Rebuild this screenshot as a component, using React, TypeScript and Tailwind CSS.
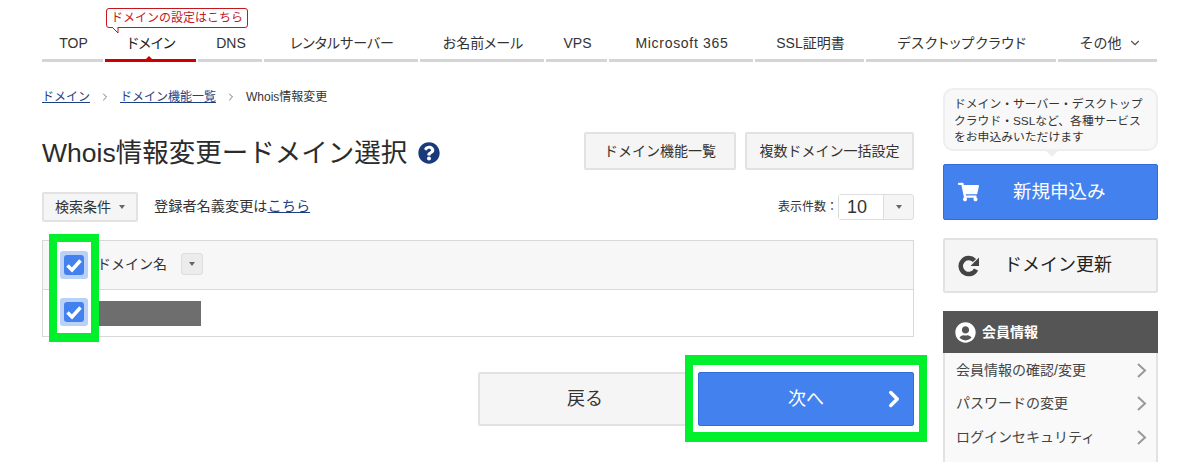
import { ChevronDown, ChevronRight } from 'lucide-react'
import { FaQuestionCircle, FaShoppingCart, FaUserCircle } from 'react-icons/fa'

const navItems = [
  { label: 'TOP', width: 'w-[61px]' },
  { label: 'ドメイン', width: 'w-[91px]', active: true },
  { label: 'DNS', width: 'w-[64px]' },
  { label: 'レンタルサーバー', width: 'w-[154px]' },
  { label: 'お名前メール', width: 'w-[124px]' },
  { label: 'VPS', width: 'w-[61px]' },
  { label: 'Microsoft 365', width: 'w-[144px]', extra: 'tracking-[0.7px]' },
  { label: 'SSL証明書', width: 'w-[109px]' },
  { label: 'デスクトップクラウド', width: 'w-[190px]', extra: 'tracking-[0.8px]' },
]

const memberLinks = ['会員情報の確認/変更', 'パスワードの変更', 'ログインセキュリティ']

function Caret() {
  return <span className="inline-block border-x-[3px] border-t-[4px] border-x-transparent border-t-[#666]" />
}

function Check() {
  return (
    <span className="flex h-[28px] w-[28px] items-center justify-center rounded-[3px] bg-[#b9d0f7]">
      <span className="flex h-[20px] w-[20px] items-center justify-center rounded-[3px] bg-[#4382ee]">
        <svg viewBox="0 0 20 20" className="h-[20px] w-[20px]" fill="none" stroke="#fff" strokeWidth="3.5">
          <path d="M3.5 10.5 8 15 16.5 5.5" />
        </svg>
      </span>
    </span>
  )
}

function ListChevron() {
  return (
    <svg viewBox="0 0 10 15" className="h-[15px] w-[10px]" fill="none" stroke="#999" strokeWidth="2">
      <path d="M1 1l7 6.5-7 6.5" />
    </svg>
  )
}

export default function App() {
  return (
    <div className="relative h-[462px] w-[1200px] overflow-hidden bg-white font-['Liberation_Sans','Noto_Sans_CJK_JP',sans-serif] text-[#333]">
      <nav className="relative flex gap-[2px] pl-[42px] pt-[26px]">
        <div className="absolute left-[106px] top-[8px] flex h-[20px] w-[142px] items-center justify-center rounded-[3px] border border-[#c4161c] bg-white text-[12px] text-[#c4161c]">
          ドメインの設定はこちら
          <svg viewBox="0 0 8 7" className="absolute left-[5px] top-[18px] h-[7px] w-[8px]" fill="#fff" stroke="#c4161c">
            <path d="M0 0 6 6V0" />
          </svg>
        </div>
        {navItems.map((item) => (
          <div
            key={item.label}
            className={`${item.width} ${item.extra ?? ''} relative flex h-[36px] items-start justify-center border-b-[3px] pl-[2px] pt-[7px] text-[14px] leading-[20px] [font-feature-settings:'palt'] ${item.active ? 'border-[#c00] text-[#222]' : 'border-[#d5d5d5] text-[#333]'}`}
          >
            {item.label}
            {item.active && (
              <span className="absolute bottom-0 left-[41px] border-x-[3px] border-b-[3px] border-x-transparent border-b-[#c00]" />
            )}
          </div>
        ))}
        <div className="flex h-[36px] w-[99px] items-start justify-center gap-[6px] border-b-[3px] border-[#d5d5d5] pl-[6px] pt-[7px] text-[14px] leading-[20px]">
          その他
          <ChevronDown size={14} className="mt-[3px] text-[#555]" />
        </div>
      </nav>

      <main className="flex pl-[42px] pt-[26px]">
        <div className="w-[872px]">
          <div className="flex h-[18px] items-center text-[12px] leading-[18px]">
            <a className="text-[#1e3f84] underline">ドメイン</a>
            <ChevronRight size={12} className="mx-[9px] text-[#777]" />
            <a className="text-[#1e3f84] underline">ドメイン機能一覧</a>
            <ChevronRight size={12} className="mx-[9px] text-[#777]" />
            <span>Whois情報変更</span>
          </div>

          <div className="mt-[26px] flex h-[38px] items-center">
            <h1 className="pt-[3px] text-[26.5px] font-normal leading-[38px] text-[#2b2b2b]">Whois情報変更ードメイン選択</h1>
            <FaQuestionCircle className="ml-[11px] mt-[4px] h-[22px] w-[22px] text-[#1a3a7c]" />
            <div className="ml-auto flex gap-[9px]">
              <button className="h-[38px] w-[152px] rounded-[2px] border-2 border-[#e2e2e2] bg-[#f5f5f5] text-[14px]">ドメイン機能一覧</button>
              <button className="h-[38px] w-[169px] rounded-[2px] border-2 border-[#e2e2e2] bg-[#f5f5f5] text-[14px]">複数ドメイン一括設定</button>
            </div>
          </div>

          <div className="mt-[22px] flex h-[30px] items-center">
            <button className="flex h-[30px] w-[96px] items-center justify-center gap-[8px] rounded-[2px] border-2 border-[#e2e2e2] bg-[#f5f5f5] text-[14px]">
              検索条件
              <Caret />
            </button>
            <span className="ml-[16px] text-[14.2px]">
              登録者名義変更は<a className="text-[#1e3f84] underline">こちら</a>
            </span>
            <span className="ml-auto text-[12px]">表示件数：</span>
            <div className="flex h-[26px] w-[76px] rounded-[3px] border border-[#ddd] bg-[#f5f5f5]">
              <span className="flex w-[45px] items-center justify-center border-r border-[#ddd] bg-white pr-[8px] text-[18px]">10</span>
              <span className="flex flex-1 items-center justify-center"><Caret /></span>
            </div>
          </div>

          <div className="relative mt-[18px] border border-[#d8d8d8]">
            <div className="flex h-[49px] items-center border-b border-[#d8d8d8] bg-[#f7f7f7] pb-[2px] pl-[54px] text-[14px]">
              ドメイン名
              <span className="ml-[14px] flex h-[22px] w-[22px] items-center justify-center rounded-[3px] border border-[#ddd] bg-[#ececec]">
                <Caret />
              </span>
            </div>
            <div className="flex h-[46px] items-center pl-[56px]">
              <span className="h-[25px] w-[102px] bg-[#6e6e6e]" />
            </div>
            <div className="absolute left-[6px] top-[-7px] flex h-[108px] w-[50px] flex-col items-center gap-[19px] border-[8px] border-b-[9px] border-[#00f02b] bg-white pt-[9px]">
              <Check />
              <Check />
            </div>
          </div>

          <div className="mt-[35px] flex justify-end gap-[6px]">
            <button className="h-[54px] w-[214px] rounded-[2px] border-2 border-[#e2e2e2] bg-[#f5f5f5] text-[18px]">戻る</button>
            <div className="relative h-[54px] w-[216px]">
              <div className="absolute bottom-[-16px] left-[-13px] right-[-13px] top-[-17px] border-[8px] border-y-[10px] border-[#00f02b] bg-white" />
              <button className="relative flex h-[54px] w-[216px] items-center justify-center rounded-[2px] border border-[#2f6fdc] bg-[#4382ee] text-[18px] text-white">
                次へ
                <ChevronRight size={26} strokeWidth={3.2} className="absolute right-[6px]" />
              </button>
            </div>
          </div>
        </div>

        <aside className="ml-[29px] w-[215px]">
          <div className="relative h-[63px] rounded-[10px] border-2 border-[#eee] bg-[#f8f8f8] pl-[9px] pt-[6px] text-[11.8px] leading-[16.5px]">
            ドメイン・サーバー・デスクトップ
            <br />
            クラウド・SSLなど、各種サービス
            <br />
            をお申込みいただけます
            <span className="absolute bottom-[-8px] left-[100px] border-x-[7px] border-t-[7px] border-x-transparent border-t-[#eee]" />
          </div>
          <button className="relative mt-[13px] flex h-[56px] w-full items-center rounded-[2px] border border-[#2f6fdc] bg-[#4382ee] pl-[69px] text-[18.5px] text-white">
            <FaShoppingCart className="absolute left-[14px] h-[20px] w-[21px]" />
            新規申込み
          </button>
          <button className="relative mt-[18px] flex h-[55px] w-full items-center rounded-[2px] border-2 border-[#e2e2e2] bg-[#f5f5f5] pl-[59px] text-[18px] text-[#222]">
            <svg viewBox="0 0 24 24" className="absolute left-[12px] h-[24px] w-[24px]" fill="none" stroke="#444">
              <path d="M19 15.5A8 8 0 1 1 17.5 6.5" strokeWidth="4.5" />
              <path d="M22 3.5v8.5h-8.5z" fill="#444" stroke="none" />
            </svg>
            ドメイン更新
          </button>
          <div className="mt-[18px]">
            <div className="flex h-[42px] items-center gap-[6px] bg-[#555] pl-[12px] text-[14px] font-bold text-white">
              <FaUserCircle className="h-[21px] w-[21px]" />
              会員情報
            </div>
            <ul className="h-[120px] border-x-2 border-[#e2e2e2] bg-[#f9f9f9] pl-[11px] pt-[0.5px]">
              {memberLinks.map((link) => (
                <li key={link} className="flex h-[33.5px] items-center justify-between pr-[9px] text-[14px] text-[#444]">
                  {link}
                  <ListChevron />
                </li>
              ))}
            </ul>
          </div>
        </aside>
      </main>
    </div>
  )
}
